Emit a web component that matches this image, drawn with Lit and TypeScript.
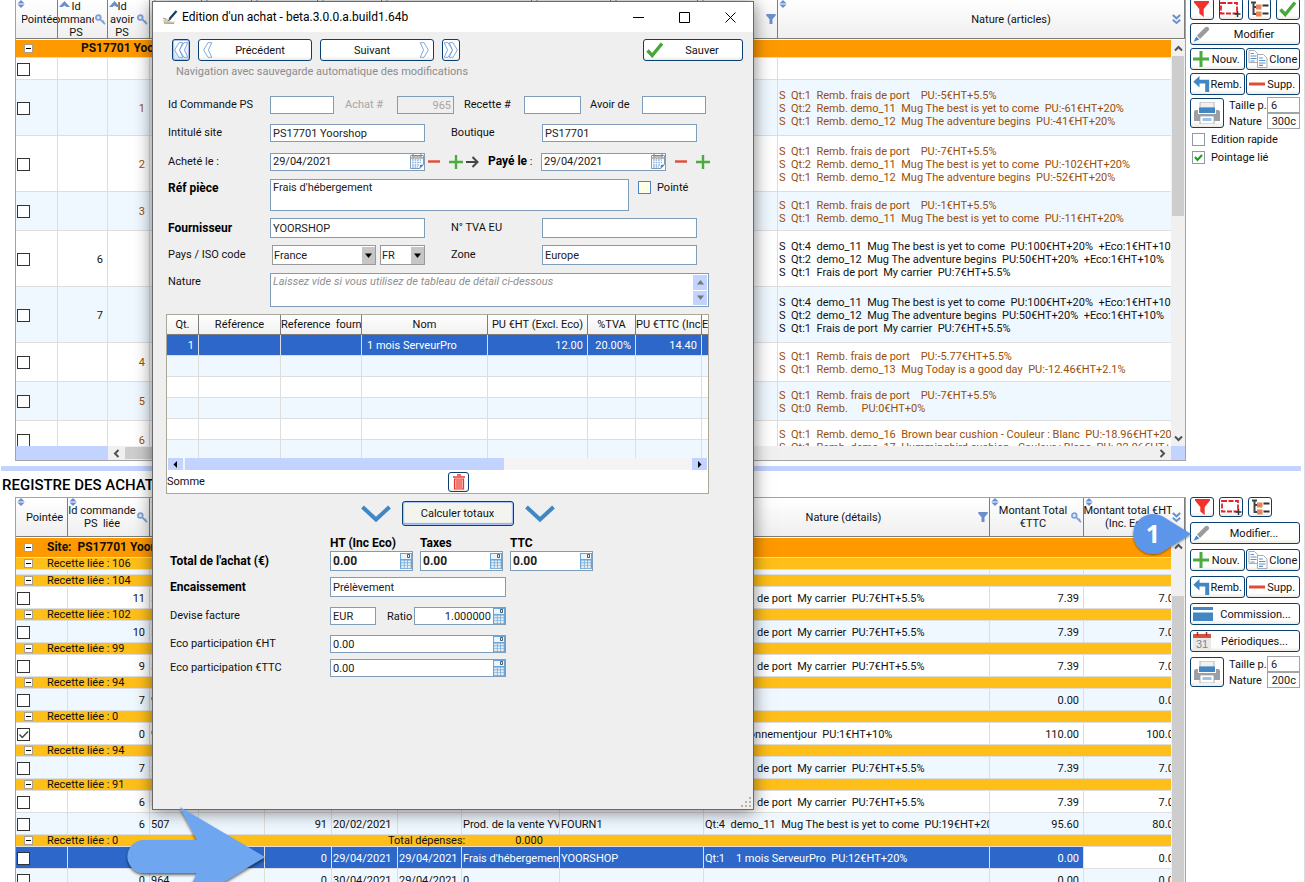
import { LitElement, html, svg, css, nothing } from "lit";
import { customElement, property } from "lit/decorators.js";
import { classMap } from "lit/directives/class-map.js";
import { styleMap } from "lit/directives/style-map.js";

/* ---------- icons ---------- */

const sortIcon = html`<svg width="8" height="8" viewBox="0 0 8 8"><path d="M4 0L7.600 3.400H.4zM4 8L.4 4.600h7.200z" fill="#6a8fd0"/></svg>`;
const upIcon = html`<svg width="11" height="7" viewBox="0 0 11 7"><path d="M5.500 1L11 7H7.500L5.500 5.500 3.500 7H0z" fill="#6a8fd0"/></svg>`;
const keyIcon = html`<svg width="11" height="11" viewBox="0 0 11 11"><circle cx="3.300" cy="3.500" r="2.400" fill="#dfe8f8" stroke="#7f9fd8" stroke-width="1.700"/><path d="M5 5.200l5 5M7.300 8.600l1.600-1.600" stroke="#7f9fd8" stroke-width="1.800"/></svg>`;
const funnelSmall = html`<svg width="10" height="10" viewBox="0 0 10 10"><path d="M.3 0h9.400v1.600L6.500 5.300V10h-3V5.300L.3 1.600z" fill="#6a8fd0"/></svg>`;
const doubleDown = html`<svg width="9" height="11" viewBox="0 0 9 11"><path d="M.8 1l3.700 3.300L8.200 1M.8 5.700L4.500 9l3.700-3.300" fill="none" stroke="#6a8fd0" stroke-width="2"/></svg>`;
const minusBox = html`<svg width="9" height="9" viewBox="0 0 9 9"><rect x=".5" y=".5" width="8" height="8" fill="#fff" stroke="#a9a08a"/><path d="M2 4.500h5" stroke="#000"/></svg>`;
const chev = (d: string) => html`<svg width="9" height="9" viewBox="0 0 9 9"><path d=${d} fill="none" stroke="#505050" stroke-width="2"/></svg>`;
const chevUp = chev("M1 6.500l3.500-3.500L8 6.500");
const chevDown = chev("M1 2.500L4.500 6 8 2.500");
const chevLeft = chev("M6.500 1L3 4.500 6.500 8");
const chevRight = chev("M2.500 1L6 4.500 2.500 8");

const funnelIcon = html`<svg width="15" height="16" viewBox="0 0 15 16"><path d="M0 0h15v1.500L9.700 8v8L5.300 12.500V8L0 1.500z" fill="#f2302c"/></svg>`;
const selectIcon = html`<svg width="21" height="16" viewBox="0 0 21 16"><rect x="1" y="2" width="16" height="10.500" fill="none" stroke="#e0232b" stroke-width="1.800" stroke-dasharray="5 1.500"/><path d="M14.500 13h6M17.500 10v6" stroke="#333" stroke-width="1.500"/></svg>`;
const treeIcon = html`<svg width="19" height="16" viewBox="0 0 19 16"><path d="M3.500 1v13M1 1.500h5M4 6h4M4 13h4" stroke="#444" stroke-width="2" fill="none"/><path d="M6 3.500h5.500v5H6zM6 10.500h5.500v5H6z" fill="#ea8353"/><path d="M12.500 4.500h6M12.500 12.500h6" stroke="#333" stroke-width="1.800"/></svg>`;
const checkIcon = html`<svg width="18" height="16" viewBox="0 0 18 16"><path d="M1.500 8.500l4.700 5L16 1.500" fill="none" stroke="#45a83a" stroke-width="3.400"/></svg>`;
const pencilIcon = html`<svg width="17" height="16" viewBox="0 0 17 16"><path d="M4 9.500L12.300 1.200Q14 0 15.500 1.500T15.500 4.600L7 13z" fill="#9b9b9b"/><path d="M3.300 10.500l3 3L.6 15.700z" fill="#4187c3"/></svg>`;
const plusIcon = html`<svg width="16" height="16" viewBox="0 0 16 16"><path d="M8 0v16M0 8h16" stroke="#4bab3f" stroke-width="3"/></svg>`;
const cloneIcon = html`<svg width="20" height="18" viewBox="0 0 20 18"><path d="M1 .5h5.500l3 3v9H1z" fill="#fff" stroke="#a8adb5"/><path d="M9.500 4.500h6l3.500 3.500v9.500H9.500z" fill="#fff" stroke="#a8adb5"/><path d="M2.500 3.500h3.500M2.500 6h6M2.500 8.500h6M2.500 11h4M11 8h4M11 10.500h6.500M11 13h6.500M11 15.300h4" stroke="#5a94cb" stroke-width="1.200"/></svg>`;
const returnIcon = html`<svg width="17" height="16" viewBox="0 0 17 16"><path d="M6.500 0v3.700h9.700V16h-4V7.500H6.500v3.900L.3 5.700z" fill="#4187c3"/></svg>`;
const minusIcon = html`<svg width="16" height="4" viewBox="0 0 16 4"><path d="M0 2h16" stroke="#e04c36" stroke-width="3"/></svg>`;
const barsIcon = html`<svg width="20" height="14" viewBox="0 0 20 14"><path d="M0 0h20v3H0zM0 5.500h20V14H0z" fill="#4187c3"/></svg>`;
const calendar31 = html`<svg width="18" height="18" viewBox="0 0 18 18"><rect y="2" width="18" height="16" fill="#e9e9e9"/><path d="M0 2h18v4H0z" fill="#d9503f"/><path d="M4.500 0v4M13.500 0v4" stroke="#a33" stroke-width="1.600"/><text x="9" y="16" text-anchor="middle" font-family="Liberation Sans, sans-serif" font-size="11" fill="#7b8792">31</text></svg>`;
const printerIcon = html`<svg width="26" height="22" viewBox="0 0 26 22"><path d="M6 0h14v6H6z" fill="#f1f1f1" stroke="#a8a8a8" stroke-width=".8"/><path d="M5 5.500h16V11H5z" fill="#4187c3"/><path d="M0 10q0-2 2-2h2v4h18V8h2q2 0 2 2v9H0z" fill="#9c9fa3"/><path d="M6 14h14v8H6z" fill="#fff" stroke="#9c9fa3" stroke-width=".8"/><path d="M8.500 17.500h9" stroke="#9cc3e6" stroke-width="3"/></svg>`;
const trashIcon = html`<svg width="12" height="16" viewBox="0 0 12 16"><path d="M0 3h12M4 1h4" stroke="#e8382f" stroke-width="1.600"/><path d="M1.500 5h9v10h-9z" fill="#fbb" stroke="#e8382f" stroke-width="1.200"/><path d="M4 6v8M6 6v8M8 6v8" stroke="#e8382f"/></svg>`;
const calendarIcon = html`<svg width="14" height="15" viewBox="0 0 14 15"><path d="M.5 1.500h13v9l-3.500 4H.5z" fill="#fff" stroke="#7f9db9"/><path d="M13.500 10.500l-4 4 .5-3.500z" fill="#3f7fbf"/><path d="M1 4h12M3 0v3.500M11 0v3.500M3.500 2h7" stroke="#777"/><path d="M2 6h9M2 8.500h9M2 11h7M2 13h6" stroke="#8cb3e2" stroke-width="1.600" stroke-dasharray="1.700 .9"/></svg>`;
const calcIcon = html`<svg width="12" height="16" viewBox="0 0 12 16"><rect width="12" height="16" fill="#69a5d8"/><path d="M1 1h10v5H1z" fill="#e8f5fc"/><path d="M7.500 1.500h2v3h-2z" fill="none" stroke="#333" stroke-width=".8"/><path d="M1.200 8.500h9.600M1.200 11.300h9.600M1.200 14.100h9.600" stroke="#e8edf2" stroke-width="2.200" stroke-dasharray="2.700 .7"/></svg>`;
const smallMinus = html`<svg width="12" height="3" viewBox="0 0 12 3"><path d="M0 1.500h12" stroke="#e04c36" stroke-width="2.400"/></svg>`;
const smallPlus = html`<svg width="14" height="14" viewBox="0 0 14 14"><path d="M7 0v14M0 7h14" stroke="#4bab3f" stroke-width="2.400"/></svg>`;
const arrowRight = html`<svg width="13" height="12" viewBox="0 0 13 12"><path d="M0 6h11M6.500 1l5 5-5 5" fill="none" stroke="#444" stroke-width="2"/></svg>`;
const bigChevron = html`<svg width="30" height="18" viewBox="0 0 30 18"><path d="M1.500 2L15 14.500 28.500 2" fill="none" stroke="#4187c3" stroke-width="4"/></svg>`;
const navShape = (dir: number, double: boolean) => {
  const one = (x: number) => svg`<path transform="translate(${x} 0)" d="M5 .7h3.800L5.400 8l3.400 7.300H5L.6 8z" fill="#fff" stroke="#86a9dd"/>`;
  return html`<svg width=${double ? 14 : 10} height="16" viewBox=${double ? "0 0 14 16" : "0 0 10 16"}>
    <g transform=${dir < 0 ? "" : double ? "translate(14 0) scale(-1 1)" : "translate(10 0) scale(-1 1)"}>${one(0)}${double ? one(5) : nothing}</g></svg>`;
};
const tri = (d: string, color = "#000") => html`<svg width="7" height="7" viewBox="0 0 7 7"><path d=${d} fill=${color}/></svg>`;
const appIcon = html`<svg width="16" height="15" viewBox="0 0 16 15"><path d="M1 10q4-3 6 0t6 1l-1 3H2z" fill="#d6cfb8"/><path d="M1 8l3 1M2 13l10 .5" stroke="#a9a189"/><path d="M14.500 1L7.500 9" stroke="#1d3c5c" stroke-width="2.200"/><path d="M8 8l-2.500 3.500L9 9.500z" fill="#444"/></svg>`;

/* ---------- shared styles ---------- */

const base = css`
  * { box-sizing: border-box; }
  svg { display: block; flex: none; }
  button {
    font: inherit; color: #111; margin: 0; padding: 0 2px;
    display: inline-flex; align-items: center; justify-content: center;
    border: 1px solid #0a3f73; border-radius: 3px;
    background: linear-gradient(#fff 80%, #ecebe4);
    white-space: nowrap; overflow: hidden;
  }
  button .cap { flex: 1; text-align: center; }
  button.bare { border: 0; background: none; padding: 0; border-radius: 0; overflow: visible; }
  input, textarea, select { font: inherit; color: #222; margin: 0; border-radius: 0; outline: 0; }
  table { border-collapse: separate; border-spacing: 0; table-layout: fixed; width: 100%; }
  td, th { padding: 0; font-weight: 400; overflow: hidden; }
  td { white-space: pre; }
`;

/* ---------- register grids ---------- */

interface Col { label: string; width?: number; sort?: "both" | "up"; tail?: "key" | "funnel" | "more"; num?: boolean; lead?: "near" | "far"; }
interface Row {
  kind: "site" | "group" | "thin" | "data";
  label?: string; total?: string; cells?: string[];
  alt?: boolean; height?: number; checked?: boolean; selected?: boolean; refund?: boolean;
}

@customElement("register-grid")
class RegisterGrid extends LitElement {
  @property({ attribute: false }) columns: Col[] = [];
  @property({ attribute: false }) rows: Row[] = [];
  @property() name = "";
  @property({ type: Boolean }) hbar = false;
  @property({ type: Boolean }) framed = false;

  static styles = [base, css`
    :host { display: flex; flex-direction: column; min-width: 0; min-height: 0; overflow: hidden; border: 1px solid #a3a3a3; border-top: 0; border-bottom: 0; }
    :host([framed]) { border-top: 1px solid #a3a3a3; }
    :host([hbar]) { border-bottom: 1px solid #a3a3a3; }
    .view { flex: 1; min-height: 0; position: relative; overflow: hidden; }
    th { height: 39px; position: relative; border-right: 1px solid #7d7d7d; border-bottom: 1px solid #7d7d7d; background: linear-gradient(#fff, #efefef); line-height: 13px; }
    .head { display: flex; align-items: center; height: 38px; }
    .head.near { padding-left: 6px; }
    .head.far { padding-left: 72px; }
    .text { flex: 1; min-width: 0; overflow: hidden; display: flex; justify-content: center; text-align: center; white-space: pre; }
    .sort { position: absolute; left: 1px; top: 0; }
    .tail { padding: 0 1px; }
    .tail.more { padding: 0 3px 0 0; }
    td { border-right: 1px solid #dedede; border-bottom: 1px solid #dedede; line-height: 13px; padding: 1px 1px 0; background: #fff; }
    .alt td { background: #f0f8ff; }
    td.num { text-align: right; padding-right: 4px; }
    .refund td { color: #9a4e08; }
    .site td { background: #ff9900; font-weight: 700; border-right: 0; border-top: 1px solid #fff; font-size: 12px; padding-top: 0; }
    .group td { background: #ffbf1a; border-right: 0; padding-top: 0; }
    .thin td { padding: 0; }
    .band { display: flex; align-items: center; padding-left: 7px; }
    .band .label { margin-left: 14px; }
    .deep .label { margin-left: 48px; }
    .group .band { height: 11px; line-height: 12px; overflow: hidden; }
    .group .label.wide { width: 341px; }
    .sum { margin-left: 50px; }
    .selected td { background: #2c67c9; color: #fff; }
    .selected td:last-child { background: #fff; color: #111; }
    input { appearance: none; display: block; width: 13px; height: 13px; border: 1px solid #333; background: #fff; }
    .tick { display: grid; width: 13px; }
    .tick > * { grid-area: 1 / 1; }
    .tick svg { pointer-events: none; z-index: 1; }
    .vbar { position: absolute; right: 0; top: 40px; bottom: 0; width: 14px; background: #f0f0f0; display: flex; flex-direction: column; align-items: center; }
    .vbar .arrow { height: 16px; display: grid; place-items: center; }
    .vbar .thumb { width: 12px; background: #cdcdcd; }
    .vbar .above { height: 42px; }
    .vbar .page { height: 160px; }
    .grow { flex: 1; }
    .hbar { flex: none; display: flex; height: 14px; background: #f0f0f0; align-items: center; }
    .hbar .lock { width: 92px; height: 14px; background: #c2d3ff; }
    .hbar .arrow { width: 17px; display: grid; place-items: center; }
    .hbar .thumb { width: 420px; height: 12px; background: #cdcdcd; }
    .hbar .corner { width: 14px; height: 14px; background: #c2d3ff; }
  `];

  private row(r: Row) {
    const n = this.columns.length;
    if (r.kind === "site") return html`<tr class="site" style=${styleMap({ height: `${r.height}px` })}><td colspan=${n}><div class=${classMap({ band: true, deep: this.hbar })}>${minusBox}<span class="label">${r.label}</span></div></td></tr>`;
    if (r.kind === "group") return html`<tr class="group"><td colspan=${n}><div class="band">${minusBox}<span class=${classMap({ label: true, wide: !!r.total })}>${r.label}</span>${r.total ? html`<span>Total dépenses:</span><span class="sum">${r.total}</span>` : nothing}</div></td></tr>`;
    const cls = classMap({ alt: !!r.alt, refund: !!r.refund, selected: !!r.selected, thin: r.kind === "thin" });
    if (r.kind === "thin") return html`<tr class=${cls} style="height:5px">${this.columns.map(() => html`<td></td>`)}</tr>`;
    return html`<tr class=${cls} style=${styleMap({ height: `${r.height ?? 22}px` })}>
      <td><span class="tick"><input type="checkbox" aria-label="Pointée" .checked=${!!r.checked}>${r.checked ? html`<svg width="13" height="13" viewBox="0 0 13 13"><path d="M2.500 6.500L5.300 9.500 11 3.500" fill="none" stroke="#444" stroke-width="1.400"/></svg>` : nothing}</span></td>
      ${this.columns.slice(1).map((c, i) => html`<td class=${c.num ? "num" : ""}>${r.cells?.[i] ?? ""}</td>`)}
    </tr>`;
  }

  render() {
    return html`<div class="view">
        <table aria-label=${this.name}>
          <colgroup>${this.columns.map(c => html`<col style=${styleMap(c.width ? { width: `${c.width}px` } : {})}>`)}</colgroup>
          <thead><tr>${this.columns.map(c => html`<th scope="col">
            ${c.sort ? html`<span class="sort">${c.sort === "up" ? upIcon : sortIcon}</span>` : nothing}
            <div class="head ${c.lead ?? ""}"><span class="text">${c.label}</span>${c.tail ? html`<span class="tail ${c.tail}">${c.tail === "key" ? keyIcon : c.tail === "funnel" ? funnelSmall : doubleDown}</span>` : nothing}</div></th>`)}</tr></thead>
          <tbody>${this.rows.map(r => this.row(r))}</tbody>
        </table>
        <div class="vbar"><span class="arrow">${chevUp}</span>
          ${this.hbar
            ? html`<span class="thumb page"></span><span class="grow"></span><span class="arrow">${chevDown}</span>`
            : html`<span class="above"></span><span class="thumb grow"></span>`}
        </div>
      </div>
      ${this.hbar ? html`<div class="hbar"><span class="lock"></span><span class="arrow">${chevLeft}</span><span class="thumb"></span><span class="grow"></span><span class="arrow">${chevRight}</span><span class="corner"></span></div>` : nothing}`;
  }
}

/* ---------- tool column ---------- */

@customElement("tool-column")
class ToolColumn extends LitElement {
  @property({ type: Boolean, reflect: true }) purchases = false;

  static styles = [base, css`
    :host { display: flex; flex-direction: column; gap: 3px; width: 119px; flex: none; padding: 0 5px 0 4px; }
    :host([purchases]) { gap: 5px; }
    .icons { display: flex; gap: 5px; height: 20px; align-items: flex-end; }
    .icons button { width: 24px; height: 22px; padding: 0; }
    :host([purchases]) .icons button { height: 20px; }
    .line { display: flex; gap: 1px; }
    .line button { flex: 1; height: 22px; min-width: 0; gap: 1px; }
    .print { display: flex; gap: 5px; }
    .print button { width: 34px; height: 30px; }
    .sizes { flex: 1; display: grid; grid-template-columns: 1fr 33px; align-items: center; margin-top: -1px; }
    .sizes input { width: 33px; height: 16px; border: 1px solid #a3a3ab; padding: 0 3px; background: #fff; }
    .sizes input.right { text-align: right; }
    .check { display: flex; align-items: center; gap: 6px; height: 15px; padding-left: 2px; }
    .check .box { display: grid; }
    .check .box > * { grid-area: 1 / 1; }
    .check input { appearance: none; width: 13px; height: 13px; border: 1px solid #8e9aa5; background: #fff; }
    .check svg { pointer-events: none; z-index: 1; }
    label { white-space: nowrap; }
  `];

  render() {
    const p = this.purchases;
    return html`
      <div class="icons"><button aria-label="Filtrer">${funnelIcon}</button><button aria-label="Sélection">${selectIcon}</button><button aria-label="Arborescence">${treeIcon}</button>${p ? nothing : html`<button aria-label="Valider">${checkIcon}</button>`}</div>
      <div class="line"><button>${pencilIcon}<span class="cap">Modifier${p ? "..." : ""}</span></button></div>
      <div class="line"><button>${plusIcon}<span class="cap">Nouv.</span></button><button>${cloneIcon}<span class="cap">Clone</span></button></div>
      <div class="line"><button>${returnIcon}<span class="cap">Remb.</span></button><button>${minusIcon}<span class="cap">Supp.</span></button></div>
      ${p ? html`<div class="line"><button>${barsIcon}<span class="cap">Commission...</span></button></div>
        <div class="line"><button>${calendar31}<span class="cap">Périodiques...</span></button></div>` : nothing}
      <div class="print"><button aria-label="Imprimer">${printerIcon}</button>
        <div class="sizes"><label for="size">Taille p.</label><input id="size" .value=${"6"}><label for="nat">Nature</label><input id="nat" class="right" .value=${p ? "200c" : "300c"}></div></div>
      ${p ? nothing : html`
        <div class="check"><span class="box"><input id="quick" type="checkbox"></span><label for="quick">Edition rapide</label></div>
        <div class="check"><span class="box"><input id="linked" type="checkbox" .checked=${true}><svg width="13" height="13" viewBox="0 0 13 13"><path d="M3 6l2.500 3L10 4" fill="none" stroke="#14a314" stroke-width="2"/></svg></span><label for="linked">Pointage lié</label></div>`}`;
  }
}

/* ---------- purchase editor window ---------- */

@customElement("purchase-dialog")
class PurchaseDialog extends LitElement {
  static styles = [base, css`
    :host { display: flex; flex-direction: column; background: #efefef; border: 1px solid #6a6a6a; box-shadow: 0 2px 16px rgba(0, 0, 0, .5); }
    .title { flex: none; display: flex; align-items: center; height: 30px; background: #fff; padding: 0 17px 0 9px; font: 12px Roboto, "Open Sans", sans-serif; color: #000; }
    .title .name { flex: 1; margin-left: 4px; }
    .title .ctl { display: flex; gap: 35px; }
    .body { flex: 1; padding: 7px 10px 0 13px; display: flex; flex-direction: column; position: relative; }
    .nav { display: flex; gap: 8px; height: 22px; padding-left: 6px; }
    .nav button { width: 114px; padding: 0 4px; }
    .nav button.tiny { width: 18px; padding: 0; }
    .nav button.first { background: linear-gradient(#fff, #cfdff8); box-shadow: inset 0 0 0 1px #a9c4ee; }
    .nav button.save { width: 100px; margin-left: auto; padding: 0 2px; }
    .note { color: #8c8c8c; padding: 4px 10px 0; line-height: 14px; }
    .row { display: flex; align-items: center; margin-top: 10px; padding-left: 2px; }
    .row.tight { margin-top: 7px; }
    .row.text { align-items: flex-start; margin-top: 8px; }
    .row.first { margin-top: 17px; }
    .row > label { width: 102px; flex: none; line-height: 18px; white-space: nowrap; }
    .row label.mid { width: 91px; margin-left: 26px; }
    .row label.side { margin-left: 11px; width: 52px; }
    .row label.rec { margin-left: 10px; width: 60px; }
    .row label.from { margin-left: 9px; width: 52px; }
    .row label.paid { margin-left: 9px; width: 53px; }
    .bold { font-weight: 700; color: #000; font-size: 12px; }
    .dim { color: #a6a6a6; }
    .in { border: 1px solid #7f9db9; background: #fff; height: 18px; padding: 0 2px; width: 155px; }
    .tall { height: 20px; }
    .short { width: 64px; }
    .narrow { width: 57px; }
    .right { text-align: right; }
    input:disabled { background: #efefef; color: #a6a6a6; }
    .field { display: flex; align-items: center; border: 1px solid #7f9db9; background: #fff; height: 18px; width: 155px; }
    .field input { flex: 1; min-width: 0; border: 0; background: none; padding: 0 2px; }
    .field.date { width: 125px; }
    .field.amount { width: 83px; height: 20px; font-weight: 700; font-size: 12px; }
    .field.ratio { width: 92px; }
    .field.full, .in.full { width: 176px; }
    .step { margin-left: 3px; }
    .step.plus { margin-left: 9px; }
    textarea { display: block; resize: none; border: 1px solid #7f9db9; background: #fff; padding: 1px 2px; line-height: 14px; overflow: hidden; height: 32px; }
    .ref { width: 359px; }
    .tag { display: flex; align-items: center; gap: 6px; margin-left: 9px; padding-top: 2px; }
    .tag input { appearance: none; width: 13px; height: 13px; border: 1px solid #4a86c4; background: #ffffe6; }
    .pick { display: grid; width: 104px; height: 20px; margin-left: 2px; }
    .pick.iso { width: 45px; margin-left: 4px; }
    .pick > * { grid-area: 1 / 1; }
    .pick select { appearance: none; border: 1px solid #999; background: #fff; padding: 0 1px; }
    .pick .drop { justify-self: end; align-self: center; margin-right: 1px; width: 13px; height: 17px; background: #c6c6c6; display: grid; place-items: center; pointer-events: none; z-index: 1; }
    .memo { flex: none; width: 439px; height: 34px; display: flex; border: 1px solid #7f9db9; background: #fff; }
    .memo textarea { flex: 1; border: 0; }
    .memo textarea::placeholder { color: #8f8f8f; font-style: italic; opacity: 1; }
    .spin { width: 15px; display: flex; flex-direction: column; gap: 1px; padding: 1px 1px 1px 0; }
    .spin span { flex: 1; background: #c2d3ff; display: grid; place-items: center; }
    .detail { margin-top: 7px; width: 543px; border: 1px solid #aca899; background: #fff; height: 180px; display: flex; flex-direction: column; }
    .clip { flex: 1; overflow: hidden; }
    .detail th { height: 20px; white-space: pre; border-right: 1px solid #7d7d7d; border-bottom: 1px solid #7d7d7d; background: linear-gradient(#fff, #f0f0f0); }
    .detail td { height: 21px; border-right: 1px solid #dedede; border-bottom: 1px solid #dedede; padding: 0 4px 0 5px; }
    .detail tr:nth-child(even) td { background: #f0f8ff; }
    .detail tr.sel td { background: #2c67c9; color: #fff; }
    .detail th:last-child, .detail td:last-child { padding: 0; border-right: 0; }
    .scroll { display: flex; height: 12px; margin: 0 1px; gap: 2px; background: #f4f4f4; }
    .scroll .end { width: 15px; background: #c2d3ff; display: grid; place-items: center; }
    .scroll .bar { width: 319px; background: #c2d3ff; }
    .scroll .gap { flex: 1; }
    .foot { display: flex; align-items: center; height: 23px; }
    .foot span { width: 281px; }
    .foot button { width: 21px; height: 20px; padding: 0; }
    .calc { display: flex; align-items: center; justify-content: center; gap: 11px; height: 25px; margin-top: 7px; padding-left: 6px; }
    .calc button { width: 112px; height: 25px; background: #f4f4ef; box-shadow: inset 0 0 0 1px #a9c4f5, inset 0 -1px 1px 1px #8aabec; }
    .sums { display: grid; grid-template-columns: 153px 83px 83px 83px; column-gap: 7px; align-items: center; margin-top: 9px; padding-left: 4px; }
    .sums .bold { line-height: 16px; white-space: nowrap; }
    .low { display: flex; align-items: center; padding-left: 4px; margin-top: 6px; }
    .low.gap { margin-top: 10px; }
    .low > label:first-child { width: 160px; line-height: 16px; }
    .low .cur { width: 46px; }
    .low .rat { margin: 0 3px 0 11px; width: 24px; }
    .grip { position: absolute; right: 1px; bottom: 1px; }
  `];

  private calcField(id: string, value: string, cls: string) {
    return html`<div class="field ${cls}"><input id=${id} class=${cls.includes("ratio") ? "right" : ""} .value=${value}><button class="bare" aria-label="Calculatrice">${calcIcon}</button></div>`;
  }

  render() {
    const heads = ["Qt.", "Référence", "Reference  fournisseur", "Nom", "PU €HT (Excl. Eco)", "%TVA", "PU €TTC (Inc. Eco)", "Eco"];
    const widths = [32, 82, 81, 126, 100, 48, 66, 0];
    const line = ["1", "", "", "1 mois ServeurPro", "12.00", "20.00%", "14.40", ""];
    const numeric = [0, 4, 5, 6];
    return html`
      <div class="title">${appIcon}<span class="name">Edition d'un achat - beta.3.0.0.a.build1.64b</span>
        <span class="ctl">
          <button class="bare" aria-label="Réduire"><svg width="11" height="11" viewBox="0 0 11 11"><path d="M0 5.500h11" stroke="#000"/></svg></button>
          <button class="bare" aria-label="Agrandir"><svg width="11" height="11" viewBox="0 0 11 11"><path d="M.5.5h10v10H.5z" fill="none" stroke="#000"/></svg></button>
          <button class="bare" aria-label="Fermer"><svg width="11" height="11" viewBox="0 0 11 11"><path d="M.5.5l10 10M10.500.5l-10 10" stroke="#000"/></svg></button>
        </span></div>
      <div class="body">
        <div class="nav">
          <button class="tiny first" aria-label="Premier">${navShape(-1, true)}</button>
          <button>${navShape(-1, false)}<span class="cap">Précédent</span></button>
          <button><span class="cap">Suivant</span>${navShape(1, false)}</button>
          <button class="tiny" aria-label="Dernier">${navShape(1, true)}</button>
          <button class="save">${checkIcon}<span class="cap">Sauver</span></button>
        </div>
        <div class="note">Navigation avec sauvegarde automatique des modifications</div>

        <div class="row first">
          <label for="cmd">Id Commande PS</label><input id="cmd" class="in short">
          <label class="side dim" for="ach">Achat #</label><input id="ach" class="in narrow right" disabled .value=${"965"}>
          <label class="rec" for="rec">Recette #</label><input id="rec" class="in narrow">
          <label class="from" for="avo">Avoir de</label><input id="avo" class="in short">
        </div>
        <div class="row">
          <label for="site">Intitulé site</label><input id="site" class="in" .value=${"PS17701 Yoorshop"}>
          <label class="mid" for="shop">Boutique</label><input id="shop" class="in" .value=${"PS17701"}>
        </div>
        <div class="row">
          <label for="buy">Acheté le :</label><div class="field"><input id="buy" .value=${"29/04/2021"}><button class="bare" aria-label="Calendrier">${calendarIcon}</button></div>
          <button class="bare step" aria-label="Jour précédent">${smallMinus}</button><button class="bare step plus" aria-label="Jour suivant">${smallPlus}</button><button class="bare step" aria-label="Copier la date">${arrowRight}</button>
          <label class="paid" for="paid"><span class="bold">Payé le</span> :</label><div class="field date"><input id="paid" .value=${"29/04/2021"}><button class="bare" aria-label="Calendrier">${calendarIcon}</button></div>
          <button class="bare step plus" aria-label="Jour précédent">${smallMinus}</button><button class="bare step plus" aria-label="Jour suivant">${smallPlus}</button>
        </div>
        <div class="row text">
          <label class="bold" for="ref">Réf pièce</label><textarea id="ref" class="ref" .value=${"Frais d'hébergement"}></textarea>
          <span class="tag"><input id="ptd" type="checkbox"><label for="ptd">Pointé</label></span>
        </div>
        <div class="row tight">
          <label class="bold" for="sup">Fournisseur</label><input id="sup" class="in tall" .value=${"YOORSHOP"}>
          <label class="mid" for="vat">N° TVA EU</label><input id="vat" class="in tall">
        </div>
        <div class="row tight">
          <label for="pays">Pays / ISO code</label>
          <span class="pick"><select id="pays"><option>France</option></select><span class="drop">${tri("M0 1.500h7L3.500 6z")}</span></span>
          <span class="pick iso"><select aria-label="ISO code"><option>FR</option></select><span class="drop">${tri("M0 1.500h7L3.500 6z")}</span></span>
          <label class="mid" for="zone">Zone</label><input id="zone" class="in tall" .value=${"Europe"}>
        </div>
        <div class="row text">
          <label for="nature">Nature</label>
          <div class="memo"><textarea id="nature" placeholder="Laissez vide si vous utilisez de tableau de détail ci-dessous"></textarea>
            <span class="spin"><span>${tri("M0 5.500h7L3.500 1z", "#777")}</span><span>${tri("M0 1.500h7L3.500 6z", "#777")}</span></span></div>
        </div>

        <div class="detail">
          <div class="clip"><table aria-label="Détail">
            <colgroup>${widths.map(w => html`<col style=${styleMap(w ? { width: `${w}px` } : {})}>`)}</colgroup>
            <thead><tr>${heads.map(h => html`<th scope="col">${h}</th>`)}</tr></thead>
            <tbody><tr class="sel">${line.map((v, i) => html`<td class=${numeric.includes(i) ? "right" : ""}>${v}</td>`)}</tr>
              ${[1, 2, 3, 4, 5].map(() => html`<tr>${heads.map(() => html`<td></td>`)}</tr>`)}</tbody>
          </table></div>
          <div class="scroll"><span class="end">${tri("M5 0v7L1.500 3.500z")}</span><span class="bar"></span><span class="gap"></span><span class="end">${tri("M2 0v7l3.500-3.500z")}</span></div>
          <div class="foot"><span>Somme</span><button aria-label="Supprimer">${trashIcon}</button></div>
        </div>

        <div class="calc">${bigChevron}<button>Calculer totaux</button>${bigChevron}</div>

        <div class="sums">
          <span></span><label class="bold" for="ht">HT (Inc Eco)</label><label class="bold" for="tax">Taxes</label><label class="bold" for="ttc">TTC</label>
          <span class="bold">Total de l'achat (€)</span>
          ${this.calcField("ht", "0.00", "amount")}${this.calcField("tax", "0.00", "amount")}${this.calcField("ttc", "0.00", "amount")}
        </div>
        <div class="low"><label class="bold" for="enc">Encaissement</label><input id="enc" class="in full tall" .value=${"Prélèvement"}></div>
        <div class="low gap"><label for="cur">Devise facture</label><input id="cur" class="in cur" .value=${"EUR"}><label class="rat" for="ratio">Ratio</label>${this.calcField("ratio", "1.000000", "ratio")}</div>
        <div class="low gap"><label for="eht">Eco participation €HT</label>${this.calcField("eht", "0.00", "full")}</div>
        <div class="low"><label for="ettc">Eco participation €TTC</label>${this.calcField("ettc", "0.00", "full")}</div>
        <svg class="grip" width="11" height="11" viewBox="0 0 11 11"><path d="M8 0h2v2H8zM4 4h2v2H4zM8 4h2v2H8zM0 8h2v2H0zM4 8h2v2H4zM8 8h2v2H8z" fill="#b8b4a0"/></svg>
      </div>`;
  }
}

/* ---------- data ---------- */

const salesCols: Col[] = [
  { label: "Pointée", width: 42, sort: "both", lead: "near" },
  { label: "Id\ncommande\nPS", width: 50, sort: "up", tail: "key", num: true },
  { label: "Id\navoir\nPS", width: 42, sort: "up", tail: "key", num: true },
  { label: "", width: 52, sort: "both" }, { label: "", width: 50, sort: "both" }, { label: "", width: 66, sort: "both" },
  { label: "", width: 64, sort: "both" }, { label: "", width: 150, sort: "both" }, { label: "", width: 79, sort: "both" },
  { label: "", width: 87, sort: "both" }, { label: "Boutique", width: 80, sort: "both", tail: "funnel" },
  { label: "Nature (articles)", sort: "both", tail: "more", lead: "far" },
];
const sale = (order: string, credit: string, nature: string, o: Partial<Row>): Row =>
  ({ kind: "data", cells: [order, credit, "", "", "", "", "", "", "", "", nature], ...o });
const order3 = "S  Qt:4  demo_11  Mug The best is yet to come  PU:100€HT+20%  +Eco:1€HT+10%\nS  Qt:2  demo_12  Mug The adventure begins  PU:50€HT+20%  +Eco:1€HT+10%\nS  Qt:1  Frais de port  My carrier  PU:7€HT+5.5%";
const salesRows: Row[] = [
  { kind: "site", label: "PS17701 Yoorshop", height: 19 },
  sale("", "", "", { height: 22 }),
  sale("", "1", "S  Qt:1  Remb. frais de port    PU:-5€HT+5.5%\nS  Qt:2  Remb. demo_11  Mug The best is yet to come  PU:-61€HT+20%\nS  Qt:1  Remb. demo_12  Mug The adventure begins  PU:-41€HT+20%", { height: 56, alt: true, refund: true }),
  sale("", "2", "S  Qt:1  Remb. frais de port    PU:-7€HT+5.5%\nS  Qt:2  Remb. demo_11  Mug The best is yet to come  PU:-102€HT+20%\nS  Qt:1  Remb. demo_12  Mug The adventure begins  PU:-52€HT+20%", { height: 56, refund: true }),
  sale("", "3", "S  Qt:1  Remb. frais de port    PU:-1€HT+5.5%\nS  Qt:1  Remb. demo_11  Mug The best is yet to come  PU:-11€HT+20%", { height: 39, alt: true, refund: true }),
  sale("6", "", order3, { height: 56 }),
  sale("7", "", order3, { height: 56, alt: true }),
  sale("", "4", "S  Qt:1  Remb. frais de port    PU:-5.77€HT+5.5%\nS  Qt:1  Remb. demo_13  Mug Today is a good day  PU:-12.46€HT+2.1%", { height: 39, refund: true }),
  sale("", "5", "S  Qt:1  Remb. frais de port    PU:-7€HT+5.5%\nS  Qt:0  Remb.     PU:0€HT+0%", { height: 39, alt: true, refund: true }),
  sale("", "6", "S  Qt:1  Remb. demo_16  Brown bear cushion - Couleur : Blanc  PU:-18.96€HT+20%\nS  Qt:1  Remb. demo_17  Hummingbird cushion - Couleur : Blanc  PU:-22.96€HT+20%", { height: 39, refund: true }),
];

const buyCols: Col[] = [
  { label: "Pointée", width: 52, sort: "both", lead: "near" },
  { label: "Id commande\nPS  liée", width: 82, sort: "both", tail: "key", num: true },
  { label: "", width: 49, sort: "both" }, { label: "", width: 66 }, { label: "", width: 67, num: true }, { label: "", width: 66 }, { label: "", width: 64 },
  { label: "", width: 98 }, { label: "", width: 144 },
  { label: "Nature (détails)", tail: "funnel", lead: "near" },
  { label: "Montant Total\n€TTC", width: 94, sort: "both", tail: "key", num: true, lead: "near" },
  { label: "Montant total €HT\n(Inc. Eco)", width: 101, sort: "both", tail: "more", num: true },
];
const buy = (a: string[], o: Partial<Row> = {}): Row => ({ kind: "data", cells: a, ...o });
const carrier = "Qt:1  Frais de port  My carrier  PU:7€HT+5.5%";
const short = (id: string, n: string, nature: string, ttc: string, ht: string) => [id, n, "", "", "", "", "", "", nature, ttc, ht];
const g = (label: string, total?: string): Row => ({ kind: "group", label: `Recette liée : ${label}`, total });
const buyRows: Row[] = [
  { kind: "site", label: "Site:  PS17701 Yoorshop", height: 21 },
  g("106"), { kind: "thin", alt: true },
  g("104"), buy(short("11", "507", carrier, "7.39", "7.00")),
  g("102"), buy(short("10", "507", carrier, "7.39", "7.00"), { alt: true }),
  g("99"), buy(short("9", "507", carrier, "7.39", "7.00")),
  g("94"), buy(short("7", "963", "", "0.00", "0.00"), { alt: true }),
  g("0"), buy(short("0", "963", "Qt:10  abonnementjour  PU:1€HT+10%", "110.00", "100.00"), { checked: true }),
  g("94"), buy(short("7", "507", carrier, "7.39", "7.00"), { alt: true }),
  g("91"), buy(short("6", "507", carrier, "7.39", "7.00")),
  buy(["6", "507", "", "91", "20/02/2021", "", "Prod. de la vente YVES", "FOURN1", "Qt:4  demo_11  Mug The best is yet to come  PU:19€HT+20%", "95.60", "80.00"], { alt: true }),
  g("0", "0.000"),
  buy(["", "", "", "0", "29/04/2021", "29/04/2021", "Frais d'hébergement", "YOORSHOP", "Qt:1    1 mois ServeurPro  PU:12€HT+20%", "0.00", "0.00"], { selected: true }),
  buy(["0", "964", "", "0", "30/04/2021", "29/04/2021", "0", "", "", "0.00", "0.00"], { alt: true }),
];

/* ---------- page ---------- */

@customElement("app-root")
class AppRoot extends LitElement {
  static styles = [base, css`
    :host { display: block; height: 100vh; overflow: hidden; position: relative; background: #fff; color: #111; font: 11px Roboto, "Liberation Sans", sans-serif; border-right: 1px solid #dcdcdc; box-sizing: border-box; }
    .page { display: flex; flex-direction: column; height: 100%; }
    .pane { display: flex; padding-left: 15px; min-height: 0; margin-right: -1px; }
    .pane register-grid { flex: 1; }
    .sales { flex: none; height: 461px; }
    .buys { flex: 1; }
    .split { flex: none; height: 5px; margin: 5px 3px 0 1px; background: #c2d3ff; }
    h2 { flex: none; margin: 0; padding-left: 2px; font: 500 15px Roboto, "Liberation Sans", sans-serif; line-height: 28px; height: 26px; color: #000; }
    purchase-dialog { position: absolute; left: 152px; top: 1px; width: 602px; height: 809px; }
    .pointer { position: absolute; left: 120px; top: 800px; }
    .marker { position: absolute; left: 1128px; top: 510px; }
    .marker text { font: 700 25px "Open Sans", "Noto Sans", sans-serif; }
  `];

  render() {
    return html`
      <div class="page">
        <section class="pane sales">
          <register-grid hbar name="Registre des ventes" .columns=${salesCols} .rows=${salesRows}></register-grid>
          <tool-column></tool-column>
        </section>
        <div class="split"></div>
        <h2>REGISTRE DES ACHATS</h2>
        <section class="pane buys">
          <register-grid framed name="Registre des achats" .columns=${buyCols} .rows=${buyRows}></register-grid>
          <tool-column purchases></tool-column>
        </section>
      </div>
      <purchase-dialog></purchase-dialog>
      <svg class="pointer" width="152" height="120" viewBox="0 0 152 120">
        <defs><filter id="s" x="-10%" y="-10%" width="120%" height="130%"><feDropShadow dx="0" dy="2" stdDeviation="1.500" flood-opacity=".6"/></filter></defs>
        <path d="M60 7L145 57 60 108 77 73H24a16.500 16.500 0 0 1 0-33h53z" fill="#6ea7f0" filter="url(#s)"/>
      </svg>
      <svg class="marker" width="70" height="50" viewBox="0 0 70 50">
        <defs><filter id="m" x="-10%" y="-10%" width="120%" height="130%"><feDropShadow dx="0" dy="1" stdDeviation="1" flood-opacity=".5"/></filter></defs>
        <path d="M63 24L34 42A20 20 0 1 1 34 6z" fill="#5c96ea" filter="url(#m)"/>
        <text x="25" y="33" text-anchor="middle" fill="#fff">1</text>
      </svg>`;
  }
}
